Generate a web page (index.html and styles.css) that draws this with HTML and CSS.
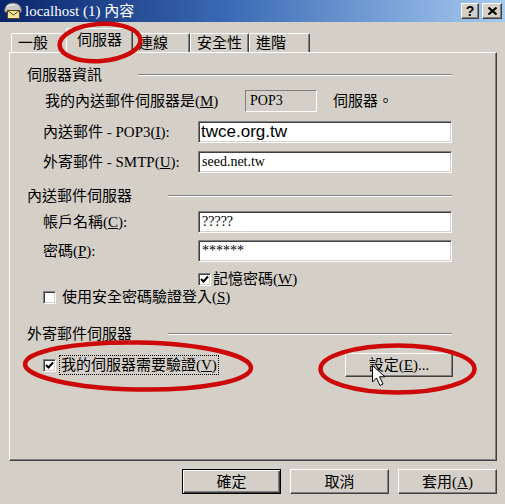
FILE: index.html
```html
<!DOCTYPE html>
<html lang="zh-Hant">
<head>
<meta charset="utf-8">
<title>localhost (1) 內容</title>
<link rel="stylesheet" href="styles.css">
</head>
<body>
<div class="window">
  <div class="titlebar">
    <svg class="app-icon" width="20" height="18" viewBox="0 0 20 18">
      <path d="M1.5 10 C1.5 3.5 5 1 10 1 C15 1 18.5 3.5 18.5 10 Z" fill="#c9c9c9" stroke="#5c5c5c"/>
      <path d="M4 4.5 C6 2.8 9 2.4 12 2.8" fill="none" stroke="#ffffff"/>
      <rect x="4.5" y="8.5" width="12" height="8" fill="#f3e3a2" stroke="#5a4818"/>
      <path d="M4.5 8.5 L10.5 13 L16.5 8.5" fill="none" stroke="#5a4818"/>
    </svg>
    <span class="title">localhost (1) 內容</span>
    <div class="caption-btns">
      <span class="cap-btn help">?</span>
      <span class="cap-btn close">
        <svg width="9" height="8" viewBox="0 0 9 8"><path d="M0.5 0.5 L8.5 7.5 M8.5 0.5 L0.5 7.5" stroke="#000" stroke-width="2"/></svg>
      </span>
    </div>
  </div>

  <div class="tabs">
    <div class="tab t1">一般</div>
    <div class="tab t2 active">伺服器</div>
    <div class="tab t3">連線</div>
    <div class="tab t4">安全性</div>
    <div class="tab t5">進階</div>
  </div>

  <div class="panel">
    <div class="group-head g-first"><span>伺服器資訊</span><i class="etch"></i></div>

    <div class="row r-type">
      <span class="lbl lbl-type">我的內送郵件伺服器是(<u>M</u>)</span>
      <span class="static-box">POP3</span>
      <span class="suffix">伺服器。</span>
    </div>

    <div class="row r-pop">
      <span class="lbl">內送郵件 - POP3(<u>I</u>):</span>
      <span class="field field-big">twce.org.tw</span>
    </div>

    <div class="row r-smtp">
      <span class="lbl">外寄郵件 - SMTP(<u>U</u>):</span>
      <span class="field">seed.net.tw</span>
    </div>

    <div class="group-head g-in"><span>內送郵件伺服器</span><i class="etch"></i></div>

    <div class="row r-acct">
      <span class="lbl">帳戶名稱(<u>C</u>):</span>
      <span class="field">?????</span>
    </div>

    <div class="row r-pass">
      <span class="lbl">密碼(<u>P</u>):</span>
      <span class="field">******</span>
    </div>

    <div class="row r-remember">
      <span class="check checked"><svg width="9" height="9" viewBox="0 0 9 9"><path d="M1 4 L3.5 6.5 L8 1.5" fill="none" stroke="#000" stroke-width="2"/></svg></span>
      <span class="check-lbl">記憶密碼(<u>W</u>)</span>
    </div>

    <div class="row r-spa">
      <span class="check"></span>
      <span class="check-lbl wide">使用安全密碼驗證登入(<u>S</u>)</span>
    </div>

    <div class="group-head g-out"><span>外寄郵件伺服器</span><i class="etch"></i></div>

    <div class="row r-auth">
      <span class="check checked"><svg width="9" height="9" viewBox="0 0 9 9"><path d="M1 4 L3.5 6.5 L8 1.5" fill="none" stroke="#000" stroke-width="2"/></svg></span>
      <span class="check-lbl focus">我的伺服器需要驗證(<u>V</u>)</span>
      <span class="btn btn-settings">設定(<u>E</u>)...</span>
    </div>
  </div>

  <div class="dlg-buttons">
    <span class="btn btn-default">確定</span>
    <span class="btn">取消</span>
    <span class="btn">套用(<u>A</u>)</span>
  </div>

  <svg class="marks" width="505" height="504" viewBox="0 0 505 504">
    <g fill="none" stroke="#cc0808" stroke-width="4.5">
      <ellipse cx="100" cy="42.5" rx="40.5" ry="18.5" transform="rotate(-4 100 42.5)"/>
      <ellipse cx="138" cy="366" rx="113" ry="23.5" transform="rotate(1 138 366)"/>
      <ellipse cx="397.5" cy="369" rx="77" ry="23.5"/>
    </g>
    <path d="M372.5 365.5 L372.5 382 L376.5 378 L380 385.5 L383 384 L379.5 376.8 L385 376.8 Z" fill="#fff" stroke="#000" stroke-width="1" stroke-linejoin="miter"/>
  </svg>
</div>
</body>
</html>
```

FILE: styles.css
```css
* { box-sizing: border-box; }

html, body {
  margin: 0;
  padding: 0;
  background: #d4d0c8;
}

body {
  font-family: "Liberation Serif", "Noto Sans CJK TC", serif;
  font-size: 15px;
  line-height: 18px;
  color: #000;
}

u { text-decoration: underline; text-underline-offset: 1px; }

.window {
  position: relative;
  width: 505px;
  height: 504px;
  overflow: hidden;
  background: #d4d0c8;
}

/* title bar */
.titlebar {
  height: 22px;
  display: flex;
  align-items: center;
  padding-left: 3px;
  background: linear-gradient(to right, #0a246a 0%, #3a6ab4 45%, #a6caf0 100%);
}

.app-icon { flex: none; }

.title {
  margin-left: 2px;
  color: #fff;
  font-size: 15px;
  white-space: nowrap;
}

.caption-btns {
  margin-left: auto;
  margin-right: 3px;
  display: flex;
  gap: 3px;
}

.cap-btn {
  width: 18px;
  height: 16px;
  display: flex;
  align-items: center;
  justify-content: center;
  background: #d4d0c8;
  border: 1px solid;
  border-color: #fff #404040 #404040 #fff;
  box-shadow: inset -1px -1px #808080;
  font-family: "Liberation Sans", sans-serif;
  font-weight: bold;
  font-size: 14px;
  line-height: 14px;
}

.cap-btn.close { width: 20px; }

/* tabs */
.tabs {
  display: flex;
  align-items: flex-end;
  height: 24px;
  margin-top: 6px;
  margin-left: 11px;
}

.tab {
  height: 19px;
  display: flex;
  align-items: center;
  padding-left: 6px;
  border: 1px solid;
  border-bottom: none;
  border-color: #fff #404040 transparent #fff;
  border-radius: 2px 2px 0 0;
  box-shadow: inset -1px 0 #808080;
  background: #d4d0c8;
  white-space: nowrap;
}

.t1 { width: 57px; }
.t2 { width: 67px; }
.t3 { width: 59px; }
.t4 { width: 59px; }
.t5 { width: 61px; }

.tab.active {
  position: relative;
  z-index: 2;
  height: 26px;
  margin: 0 -2px -2px -2px;
  padding-left: 10px;
  padding-bottom: 3px;
}

/* panel */
.panel {
  position: relative;
  margin-left: 9px;
  width: 488px;
  height: 409px;
  border: 1px solid;
  border-color: #fff #404040 #404040 #fff;
  box-shadow: inset -1px -1px #808080;
  padding: 12px 44px 0 17px;
}

.group-head {
  display: flex;
  align-items: center;
  height: 20px;
}

.etch {
  flex: 1;
  margin-left: 36px;
  height: 2px;
  border-top: 1px solid #808080;
  border-bottom: 1px solid #fff;
}

.g-in { margin-top: 13px; }
.g-out { margin-top: 18px; }

.row {
  display: flex;
  align-items: center;
  margin-left: 16px;
  height: 22px;
}

.r-type { margin-top: 5px; }
.r-pop { margin-top: 9px; }
.r-smtp { margin-top: 8px; }
.r-acct { margin-top: 5px; }
.r-pass { margin-top: 7px; }
.r-remember { margin-top: 8px; height: 18px; padding-left: 155px; }
.r-spa { height: 18px; }
.r-auth { margin-top: 9px; height: 24px; }

.lbl {
  width: 155px;
  flex: none;
  white-space: nowrap;
}

.lbl-type {
  width: 202px;
  padding-left: 2px;
}

.static-box {
  width: 72px;
  height: 22px;
  display: flex;
  align-items: center;
  padding-left: 4px;
  border: 1px solid;
  border-color: #808080 #fff #fff #808080;
  font-size: 14px;
}

.suffix { margin-left: 16px; }

.field {
  width: 254px;
  height: 22px;
  display: flex;
  align-items: center;
  padding-left: 3px;
  background: #fff;
  border: 1px solid;
  border-color: #808080 #fff #fff #808080;
  box-shadow: inset 1px 1px #404040, inset -1px -1px #d4d0c8;
  font-size: 14px;
}

.field-big {
  font-family: "Liberation Sans", sans-serif;
  font-size: 17px;
  padding-left: 2px;
}

.check {
  width: 13px;
  height: 13px;
  flex: none;
  display: flex;
  align-items: center;
  justify-content: center;
  background: #fff;
  border: 1px solid;
  border-color: #808080 #fff #fff #808080;
  box-shadow: inset 1px 1px #404040, inset -1px -1px #d4d0c8;
}

.check-lbl {
  margin-left: 2px;
  white-space: nowrap;
}

.check-lbl.wide { margin-left: 6px; }

.check-lbl.focus {
  margin-left: 3px;
  padding: 0 1px;
  border: 1px dotted #000;
}

.btn {
  display: flex;
  align-items: center;
  justify-content: center;
  height: 25px;
  background: #d4d0c8;
  border: 1px solid;
  border-color: #fff #404040 #404040 #fff;
  box-shadow: inset -1px -1px #808080;
  white-space: nowrap;
}

.btn-settings {
  margin-left: auto;
  margin-right: -1px;
  width: 108px;
  height: 24px;
}

.dlg-buttons {
  display: flex;
  justify-content: flex-end;
  gap: 9px;
  margin-top: 8px;
  padding-right: 8px;
}

.dlg-buttons .btn { width: 99px; }

.btn-default {
  border: 1px solid #000;
  box-shadow: inset 1px 1px #fff, inset -1px -1px #404040, inset -2px -2px #808080;
}

/* annotation overlay */
.marks {
  position: absolute;
  left: 0;
  top: 0;
  pointer-events: none;
  z-index: 5;
}
```
